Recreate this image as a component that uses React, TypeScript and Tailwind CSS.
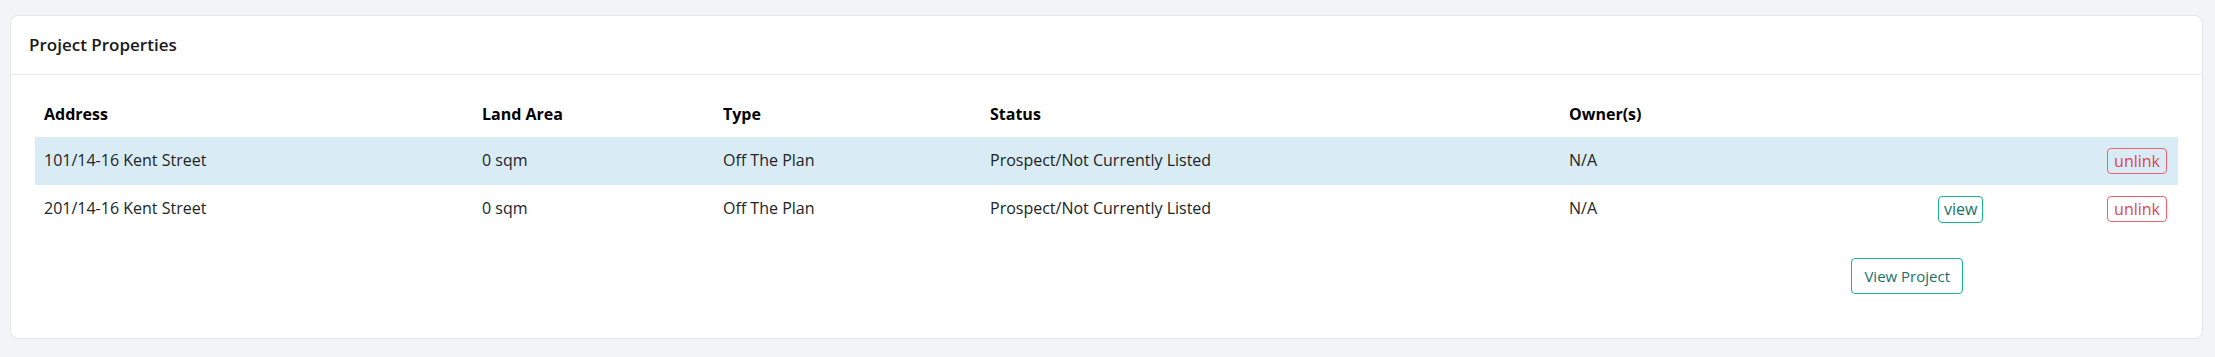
import React from 'react';

type Row = {
  address: string;
  area: string;
  type: string;
  status: string;
  owners: string;
  canView: boolean;
  highlight: boolean;
};

const rows: Row[] = [
  {
    address: '101/14-16 Kent Street',
    area: '0 sqm',
    type: 'Off The Plan',
    status: 'Prospect/Not Currently Listed',
    owners: 'N/A',
    canView: false,
    highlight: true,
  },
  {
    address: '201/14-16 Kent Street',
    area: '0 sqm',
    type: 'Off The Plan',
    status: 'Prospect/Not Currently Listed',
    owners: 'N/A',
    canView: true,
    highlight: false,
  },
];

const cols = 'grid grid-cols-[438px_241px_267px_579px_370px_170px_1fr] items-center';

const App: React.FC = () => {
  return (
    <div className="min-h-[357px] bg-[#f3f4f8] pl-[10px] pr-[12px] pt-[15px] pb-[18px] font-['Open_Sans',sans-serif] text-[#212529]">
      <div className="rounded-lg border border-[#e3e5ea] bg-white">
        <div className="flex h-[59px] items-center border-b border-[#e9eaee] px-[18px]">
          <h2 className="text-[17px] font-semibold text-[#1a1a1a]">Project Properties</h2>
        </div>

        <div className="px-[24px] pt-[16px] pb-[44px] text-base">
          <div className={`${cols} h-[46px] font-bold text-black`}>
            <div className="pl-[9px]">Address</div>
            <div className="pl-[9px]">Land Area</div>
            <div className="pl-[9px]">Type</div>
            <div className="pl-[9px]">Status</div>
            <div className="pl-[9px]">Owner(s)</div>
            <div />
            <div />
          </div>

          {rows.map((r) => (
            <div
              key={r.address}
              className={`${cols} h-[48px] ${r.highlight ? 'bg-[#d9ebf4]' : 'bg-white'}`}
            >
              <div className="pb-[3px] pl-[9px]">{r.address}</div>
              <div className="pb-[3px] pl-[9px]">{r.area}</div>
              <div className="pb-[3px] pl-[9px]">{r.type}</div>
              <div className="pb-[3px] pl-[9px]">{r.status}</div>
              <div className="pb-[3px] pl-[9px]">{r.owners}</div>
              <div className="pl-[8px]">
                {r.canView && (
                  <button className="h-[27px] rounded border border-[#1ab394] px-[5px] leading-none text-[#1d6f6c]">
                    view
                  </button>
                )}
              </div>
              <div className="flex justify-end pr-[11px]">
                <button className="h-[26px] rounded border border-[#f0616d] px-[6px] leading-none text-[#d9474f]">
                  unlink
                </button>
              </div>
            </div>
          ))}

          <div className="mt-[25px] flex justify-end pr-[215px]">
            <button className="h-[36px] rounded border border-[#1ab394] px-[12px] text-[15px] text-[#1d6f6c]">
              View Project
            </button>
          </div>
        </div>
      </div>
    </div>
  );
};

export default App;
